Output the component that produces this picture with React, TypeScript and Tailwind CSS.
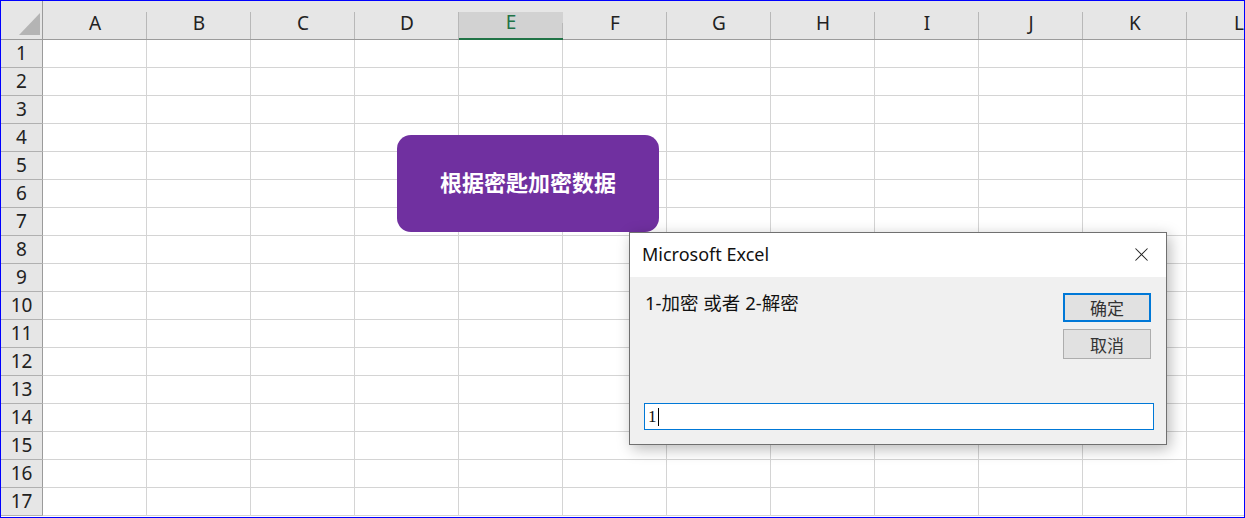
import { X } from 'lucide-react';

const COLS = ['A', 'B', 'C', 'D', 'E', 'F', 'G', 'H', 'I', 'J', 'K', 'L'];
const ROWS = Array.from({ length: 17 }, (_, i) => i + 1);
const SELECTED_COL = 'E';

function HeaderRow() {
  return (
    <div className="flex h-[39px] shrink-0 border-b border-[#9b9b9b] bg-[#e6e6e6]">
      {/* corner */}
      <div className="relative w-[42px] shrink-0 border-r border-[#9b9b9b]">
        <div className="absolute left-[18px] top-[12px] h-0 w-0 border-b-[22px] border-l-[21px] border-b-[#b4b4b4] border-l-transparent" />
      </div>
      {COLS.map((c) => {
        const selected = c === SELECTED_COL;
        return (
          <div
            key={c}
            className={`relative flex w-[104px] shrink-0 items-end justify-center pb-[1px] text-[19px] leading-[30px] after:absolute after:right-0 after:top-[11px] after:bottom-0 after:w-px after:bg-[#b8b8b8] ${
              selected
                ? 'mt-[11px] bg-[#d2d2d2] text-[#217346] border-b-2 border-[#217346] -mb-px'
                : 'text-[#222]'
            }`}
          >
            {c}
          </div>
        );
      })}
    </div>
  );
}

function GridRow({ n }: { n: number }) {
  return (
    <div className="flex h-[28px] shrink-0 border-b border-[#d4d4d4]">
      <div className="flex w-[42px] shrink-0 items-center justify-center border-r border-[#9b9b9b] bg-[#e6e6e6] text-[19px] leading-none text-[#222] shadow-[0_1px_0_#b0b0b0]">
        {n}
      </div>
      {COLS.map((c) => (
        <div key={c} className="w-[104px] shrink-0 border-r border-[#d4d4d4] bg-white" />
      ))}
    </div>
  );
}

function InputDialog() {
  return (
    <div className="absolute left-[628px] top-[231px] flex h-[213px] w-[538px] flex-col border border-[#707070] bg-[#f0f0f0] shadow-[3px_4px_14px_rgba(0,0,0,0.28)]">
      <div className="flex h-[44px] shrink-0 items-center justify-between bg-white pb-[2px] pl-[12px] pr-[13px]">
        <span className="font-['Noto_Sans','Open_Sans',sans-serif] text-[18px] text-[#111]">
          Microsoft Excel
        </span>
        <X className="h-[23px] w-[23px] text-[#222]" strokeWidth={1.1} />
      </div>
      <div className="flex flex-1 flex-col pb-[14px] pl-[14px] pr-[12px] pt-[16px]">
        <div className="flex justify-between pl-[1px] pr-[3px]">
          <span className="font-['Noto_Sans','Noto_Sans_CJK_SC',sans-serif] text-[18.5px] leading-[20px] text-[#111]">
            1-加密 或者 2-解密
          </span>
          <div className="flex flex-col gap-[7px]">
            <button className="h-[29px] w-[88px] border-2 border-[#0078d7] bg-[#e1e1e1] font-['Noto_Sans_CJK_SC',sans-serif] text-[17px] leading-none text-[#333]">
              确定
            </button>
            <button className="h-[30px] w-[88px] border border-[#adadad] bg-[#e1e1e1] font-['Noto_Sans_CJK_SC',sans-serif] text-[17px] leading-none text-[#333]">
              取消
            </button>
          </div>
        </div>
        <div className="mt-auto flex h-[27px] w-[510px] items-center border border-[#0078d7] bg-white pl-[3px]">
          <span className="font-['Liberation_Serif',serif] text-[17px] leading-none text-[#111]">1</span>
          <span className="ml-[1px] h-[18px] w-px bg-black" />
        </div>
      </div>
    </div>
  );
}

export default function App() {
  return (
    <div className="relative h-[518px] w-[1245px] overflow-hidden border border-[#0000ff] bg-white font-['Noto_Sans','Liberation_Sans',sans-serif]">
      <div className="flex flex-col">
        <HeaderRow />
        {ROWS.map((n) => (
          <GridRow key={n} n={n} />
        ))}
      </div>

      <button className="absolute left-[396px] top-[134px] flex h-[97px] w-[262px] items-center justify-center rounded-[14px] bg-[#7030a0] pb-[5px] font-['Noto_Sans_CJK_SC',sans-serif] text-[22px] font-bold text-white">
        根据密匙加密数据
      </button>

      <InputDialog />
    </div>
  );
}
